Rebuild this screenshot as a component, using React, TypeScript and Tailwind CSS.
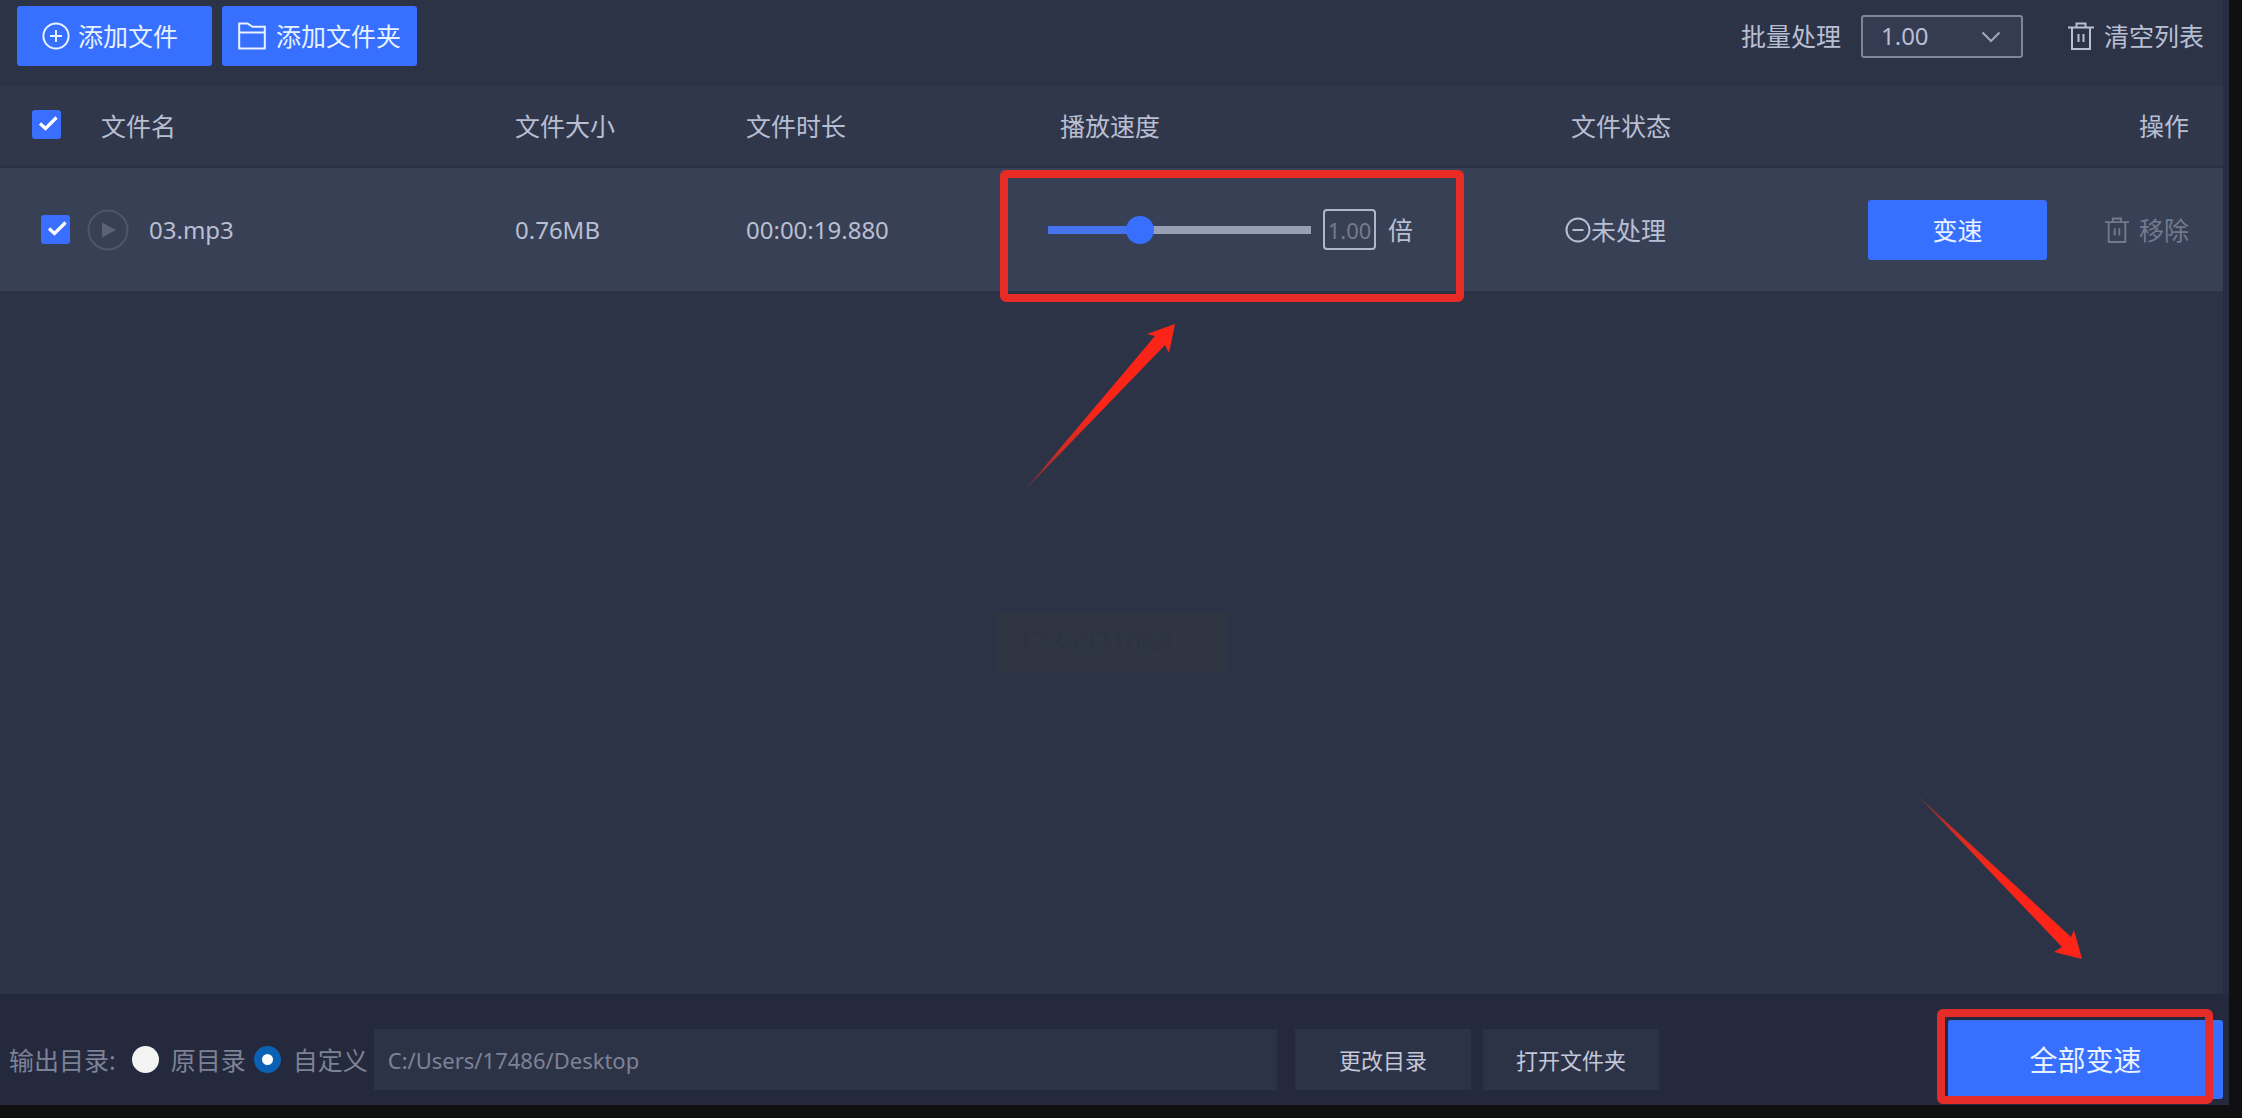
import { useState } from "react";

function TrashIcon({ className }: { className: string }) {
  return (
    <svg className={className} viewBox="0 0 26 30" fill="none" stroke="currentColor" strokeWidth="2" aria-hidden="true">
      <path d="M0 6.5H26M8.5 6V2.5H17.5V6M4 7V28H22V7M10.5 13V21M15.5 13V21" />
    </svg>
  );
}

function PlusCircleIcon() {
  return (
    <svg className="size-7 shrink-0" viewBox="0 0 28 28" fill="none" stroke="currentColor" strokeWidth="2" aria-hidden="true">
      <circle cx="14" cy="14" r="12.6" />
      <path d="M14 8V20M8 14H20" />
    </svg>
  );
}

function FolderIcon() {
  return (
    <svg className="size-7 shrink-0" viewBox="0 0 28 28" fill="none" stroke="currentColor" strokeWidth="2" aria-hidden="true">
      <path d="M1.2 26.5V1.5H9.5L14.5 4.8H26.8V26.5ZM1.2 10.5H26.8" />
    </svg>
  );
}

function MinusCircleIcon() {
  return (
    <svg className="size-[26px] shrink-0" viewBox="0 0 26 26" fill="none" stroke="currentColor" strokeWidth="2" aria-hidden="true">
      <circle cx="13" cy="13" r="11.5" />
      <path d="M7.5 13H18.5" />
    </svg>
  );
}

function PlayIcon() {
  return (
    <svg className="size-[42px]" viewBox="0 0 42 42" aria-hidden="true">
      <circle cx="21" cy="21" r="19.5" fill="none" stroke="#4f566b" strokeWidth="2" />
      <path d="M15 13.5L29 21L15 28.5Z" fill="#5b6276" />
    </svg>
  );
}

function Check({ label }: { label: string }) {
  return (
    <span className="relative inline-flex size-[29px] shrink-0">
      <input
        type="checkbox"
        defaultChecked
        aria-label={label}
        className="peer size-full appearance-none rounded-[3px] bg-[#4a5268] checked:bg-[#396eff]"
      />
      <svg
        className="pointer-events-none absolute inset-0 hidden size-full peer-checked:block"
        viewBox="0 0 29 29"
        fill="none"
        stroke="#ffffff"
        strokeWidth="3.2"
        aria-hidden="true"
      >
        <path d="M8 13.5L13.5 18.5L24.5 7.5" />
      </svg>
    </span>
  );
}

/* Points up and to the right, fading out toward its tail. */
function SpeedArrow({ className }: { className: string }) {
  return (
    <svg className={className} viewBox="0 0 151 167" aria-hidden="true">
      <defs>
        <linearGradient id="speed-arrow" x1="0" y1="1" x2="1" y2="0">
          <stop offset="0" stopColor="#f42a1c" stopOpacity="0.3" />
          <stop offset="0.25" stopColor="#f42a1c" stopOpacity="0.85" />
          <stop offset="0.5" stopColor="#fa2518" />
        </linearGradient>
      </defs>
      <path d="M0 167L131 12L123 10L151 0L145 29L141 21Z" fill="url(#speed-arrow)" />
    </svg>
  );
}

/* Points down and to the right, fading out toward its tail. */
function RunAllArrow({ className }: { className: string }) {
  return (
    <svg className={className} viewBox="0 0 166 165" aria-hidden="true">
      <defs>
        <linearGradient id="run-all-arrow" x1="0" y1="0" x2="1" y2="1">
          <stop offset="0" stopColor="#f42a1c" stopOpacity="0.3" />
          <stop offset="0.25" stopColor="#f42a1c" stopOpacity="0.85" />
          <stop offset="0.5" stopColor="#fa2518" />
        </linearGradient>
      </defs>
      <path d="M0 0L155 143L158 136L166 165L138 158L146 153Z" fill="url(#run-all-arrow)" />
    </svg>
  );
}

const MIN = 0.5;
const MAX = 2;

export default function App() {
  const [speed, setSpeed] = useState(1);
  const filled = 5 + ((speed - MIN) / (MAX - MIN)) * 90;

  return (
    <div className="flex min-h-screen flex-col bg-[#101012] pr-[13px] pb-[13px] font-['Noto_Sans','Noto_Sans_CJK_SC',sans-serif] text-[25px] leading-8 text-[#b9bfd3]">
      <div className="flex grow flex-col bg-[#262d44]">
        <div className="mr-1.5 flex grow flex-col bg-[#2d3346]">
          <header className="flex h-[86px] items-start pt-1.5 pr-[19px] pl-[17px]">
            <button className="flex h-[60px] w-[195px] items-center gap-2 rounded-[3px] bg-[#376fff] pl-[25px] text-[#e9f2ff]">
              <PlusCircleIcon />
              添加文件
            </button>
            <button className="ml-2.5 flex h-[60px] w-[195px] items-center gap-2.5 rounded-[3px] bg-[#376fff] pl-4 text-[#e9f2ff]">
              <FolderIcon />
              添加文件夹
            </button>
            <div className="ml-auto flex h-[60px] items-center">
              <label htmlFor="batch">批量处理</label>
              <span className="relative ml-5 flex">
                <select
                  id="batch"
                  defaultValue="1.00"
                  className="h-[43px] w-[162px] appearance-none rounded-[3px] border-2 border-[#7f869b] bg-[#353c52] pl-[18px] text-[24px]"
                >
                  <option>0.50</option>
                  <option>1.00</option>
                  <option>2.00</option>
                </select>
                <svg
                  className="pointer-events-none absolute top-4 right-[22px] h-3 w-5"
                  viewBox="0 0 20 12"
                  fill="none"
                  stroke="#a2a8bc"
                  strokeWidth="2"
                  aria-hidden="true"
                >
                  <path d="M1.5 1.5L10 10L18.5 1.5" />
                </svg>
              </span>
              <button className="ml-[45px] flex items-center gap-2.5">
                <TrashIcon className="h-[30px] w-[26px]" />
                清空列表
              </button>
            </div>
          </header>

          <table className="w-full table-fixed border-collapse text-left">
            <colgroup>
              <col className="w-[515px]" />
              <col className="w-[231px]" />
              <col className="w-[302px]" />
              <col />
              <col className="w-[303px]" />
              <col className="w-[355px]" />
            </colgroup>
            <thead>
              <tr className="h-[81px] border-b-2 border-[#2a3145] bg-[#31374b]">
                <th className="p-0 font-normal">
                  <div className="flex items-start gap-10 pl-8">
                    <Check label="全选" />
                    文件名
                  </div>
                </th>
                <th className="p-0 font-normal">文件大小</th>
                <th className="p-0 font-normal">文件时长</th>
                <th className="p-0 pl-3 font-normal">播放速度</th>
                <th className="p-0 pl-1.5 font-normal">文件状态</th>
                <th className="p-0 pr-[34px] text-right font-normal">操作</th>
              </tr>
            </thead>
            <tbody>
              <tr className="h-[124px] bg-[#384055]">
                <td className="p-0">
                  <div className="flex items-center pl-[41px]">
                    <Check label="03.mp3" />
                    <button aria-label="播放" className="ml-[17px]">
                      <PlayIcon />
                    </button>
                    <span className="ml-5 text-[24px]">03.mp3</span>
                  </div>
                </td>
                <td className="p-0 text-[24px]">0.76MB</td>
                <td className="p-0 text-[24px]">00:00:19.880</td>
                <td className="relative p-0">
                  <div className="flex items-center">
                    <input
                      type="range"
                      aria-label="播放速度"
                      min={MIN}
                      max={MAX}
                      step={0.01}
                      value={speed}
                      onChange={(e) => setSpeed(Number(e.target.value))}
                      style={{
                        backgroundImage: `linear-gradient(to right, #4573ee ${filled}%, #98a0b6 ${filled}%)`,
                      }}
                      className="h-2 w-[263px] appearance-none [&::-webkit-slider-thumb]:size-7 [&::-webkit-slider-thumb]:appearance-none [&::-webkit-slider-thumb]:rounded-full [&::-webkit-slider-thumb]:bg-[#386fff]"
                    />
                    <input
                      type="text"
                      aria-label="倍数"
                      readOnly
                      value={speed.toFixed(2)}
                      className="ml-3 h-[41px] w-[53px] rounded-[4px] border-2 border-[#b0b6cb] bg-transparent text-center text-[22px] text-[#747b90]"
                    />
                    <span className="ml-3">倍</span>
                  </div>
                  <div className="pointer-events-none absolute top-0.5 -left-12 h-[132px] w-[464px] rounded-md border-8 border-[#e82b25]" />
                  <SpeedArrow className="pointer-events-none absolute top-[156px] -left-6 h-[167px] w-[151px]" />
                </td>
                <td className="p-0">
                  <div className="flex items-center">
                    <MinusCircleIcon />
                    未处理
                  </div>
                </td>
                <td className="p-0">
                  <div className="flex items-center justify-between pr-[34px]">
                    <button className="h-[60px] w-[179px] rounded-[3px] bg-[#376fff] text-[#e9f2ff]">变速</button>
                    <button className="flex items-center gap-2.5 text-[#737a90]">
                      <TrashIcon className="h-7 w-6" />
                      移除
                    </button>
                  </div>
                </td>
              </tr>
            </tbody>
          </table>

          <div className="flex grow items-center justify-center">
            <div className="flex h-[60px] w-[232px] items-center bg-[#2f3543] pl-[22px] font-['Liberation_Serif',serif] text-[31px] text-[#2d3344]">
              1736931068
            </div>
          </div>
        </div>

        <footer className="flex h-[111px] items-center bg-[#24293e] pt-5 pr-1.5 pl-[9px] text-[#7d8296]">
          <span className="shrink-0">输出目录:</span>
          <label className="ml-4 flex shrink-0 items-center gap-3">
            <input
              type="radio"
              name="output"
              className="size-[27px] appearance-none rounded-full bg-[#f3f3f3] checked:border-8 checked:border-[#0b62b4] checked:bg-white"
            />
            原目录
          </label>
          <label className="ml-2 flex shrink-0 items-center gap-3">
            <input
              type="radio"
              name="output"
              defaultChecked
              className="size-[27px] appearance-none rounded-full bg-[#f3f3f3] checked:border-8 checked:border-[#0b62b4] checked:bg-white"
            />
            自定义
          </label>
          <input
            type="text"
            aria-label="输出目录"
            defaultValue="C:/Users/17486/Desktop"
            className="ml-1.5 h-[61px] min-w-0 grow bg-[#2d3347] px-3.5 text-[22px]"
          />
          <button className="ml-[18px] h-[61px] w-[176px] shrink-0 bg-[#2d3347] text-[22px] text-[#c3c7da]">更改目录</button>
          <button className="ml-3 h-[61px] w-[176px] shrink-0 bg-[#2d3347] text-[22px] text-[#c3c7da]">打开文件夹</button>
          <div className="relative ml-[289px] shrink-0">
            <button className="h-[79px] w-[275px] rounded-[3px] bg-[#376fff] text-[28px] text-[#e9f2ff]">全部变速</button>
            <div className="pointer-events-none absolute -top-[11px] -left-[11px] h-[95px] w-[276px] rounded-md border-8 border-[#e42c29]" />
            <RunAllArrow className="pointer-events-none absolute bottom-[140px] -left-8 h-[165px] w-[166px]" />
          </div>
        </footer>
      </div>
    </div>
  );
}
